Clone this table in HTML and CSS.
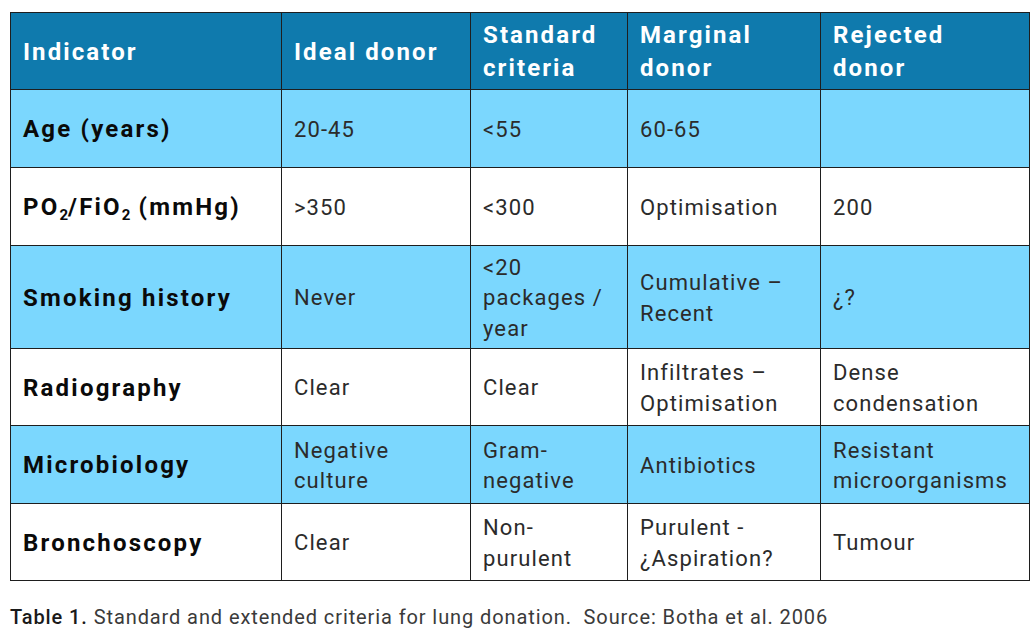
FILE: index.html
```html
<!DOCTYPE html>
<html lang="en">
<head>
<meta charset="utf-8">
<title>Lung donation criteria</title>
<link rel="stylesheet" href="styles.css">
</head>
<body>
<div class="page">
  <table class="criteria">
    <colgroup>
      <col class="c1"><col class="c2"><col class="c3"><col class="c4"><col class="c5">
    </colgroup>
    <thead>
      <tr class="head">
        <th>Indicator</th>
        <th>Ideal donor</th>
        <th>Standard<br>criteria</th>
        <th>Marginal<br>donor</th>
        <th>Rejected<br>donor</th>
      </tr>
    </thead>
    <tbody>
      <tr class="blue r78">
        <td class="label">Age (years)</td>
        <td>20-45</td>
        <td>&lt;55</td>
        <td>60-65</td>
        <td></td>
      </tr>
      <tr class="white r78">
        <td class="label">PO<sub>2</sub>/FiO<sub>2</sub> (mmHg)</td>
        <td>&gt;350</td>
        <td>&lt;300</td>
        <td>Optimisation</td>
        <td>200</td>
      </tr>
      <tr class="blue r103">
        <td class="label">Smoking history</td>
        <td>Never</td>
        <td>&lt;20<br>packages /<br>year</td>
        <td>Cumulative –<br>Recent</td>
        <td>¿?</td>
      </tr>
      <tr class="white r77">
        <td class="label">Radiography</td>
        <td>Clear</td>
        <td>Clear</td>
        <td>Infiltrates –<br>Optimisation</td>
        <td>Dense<br>condensation</td>
      </tr>
      <tr class="blue r78">
        <td class="label">Microbiology</td>
        <td>Negative<br>culture</td>
        <td>Gram-<br>negative</td>
        <td>Antibiotics</td>
        <td>Resistant<br>microorganisms</td>
      </tr>
      <tr class="white r77">
        <td class="label">Bronchoscopy</td>
        <td>Clear</td>
        <td>Non-<br>purulent</td>
        <td>Purulent -<br>¿Aspiration?</td>
        <td>Tumour</td>
      </tr>
    </tbody>
  </table>
  <p class="caption"><span class="cap-label">Table 1.</span> Standard and extended criteria for lung donation.&nbsp; Source: Botha et al. 2006</p>
</div>
</body>
</html>
```

FILE: styles.css
```css
html, body {
  margin: 0;
  padding: 0;
  background: #ffffff;
}

.page {
  padding: 12px 0 0 10px;
  font-family: Roboto, "Noto Sans", sans-serif;
}

.criteria {
  border-collapse: collapse;
  table-layout: fixed;
  width: 1019px;
}

.c1 { width: 271px; }
.c2 { width: 189px; }
.c3 { width: 157px; }
.c4 { width: 193px; }
.c5 { width: 209px; }

.criteria th,
.criteria td {
  border: 1px solid #1e1e1e;
  padding: 3px 8px 0 12px;
  vertical-align: middle;
  text-align: left;
}

.head {
  height: 77px;
  background: #0f7aad;
}

.head th {
  color: #ffffff;
  font-weight: 700;
  font-size: 24px;
  line-height: 33px;
  letter-spacing: 2.1px;
  padding-top: 2px;
}

.blue { background: #7bd7fe; }
.white { background: #ffffff; }

.r78 { height: 78px; }
.r77 { height: 77px; }
.r103 { height: 103px; }

.criteria td {
  color: #2b2b2b;
  font-size: 22px;
  line-height: 30.5px;
  letter-spacing: 1.1px;
  font-weight: 400;
}

.criteria td.label {
  color: #0a0a0a;
  font-weight: 700;
  font-size: 24px;
  letter-spacing: 2.2px;
  padding-top: 2px;
}

.label sub {
  font-size: 15px;
  vertical-align: -5px;
  line-height: 0;
  letter-spacing: 0;
}

.caption {
  margin: 24px 0 0 0;
  font-size: 20px;
  letter-spacing: 0.9px;
  color: #3a3a3a;
}

.cap-label {
  color: #1a1a1a;
  font-weight: 500;
}
```
